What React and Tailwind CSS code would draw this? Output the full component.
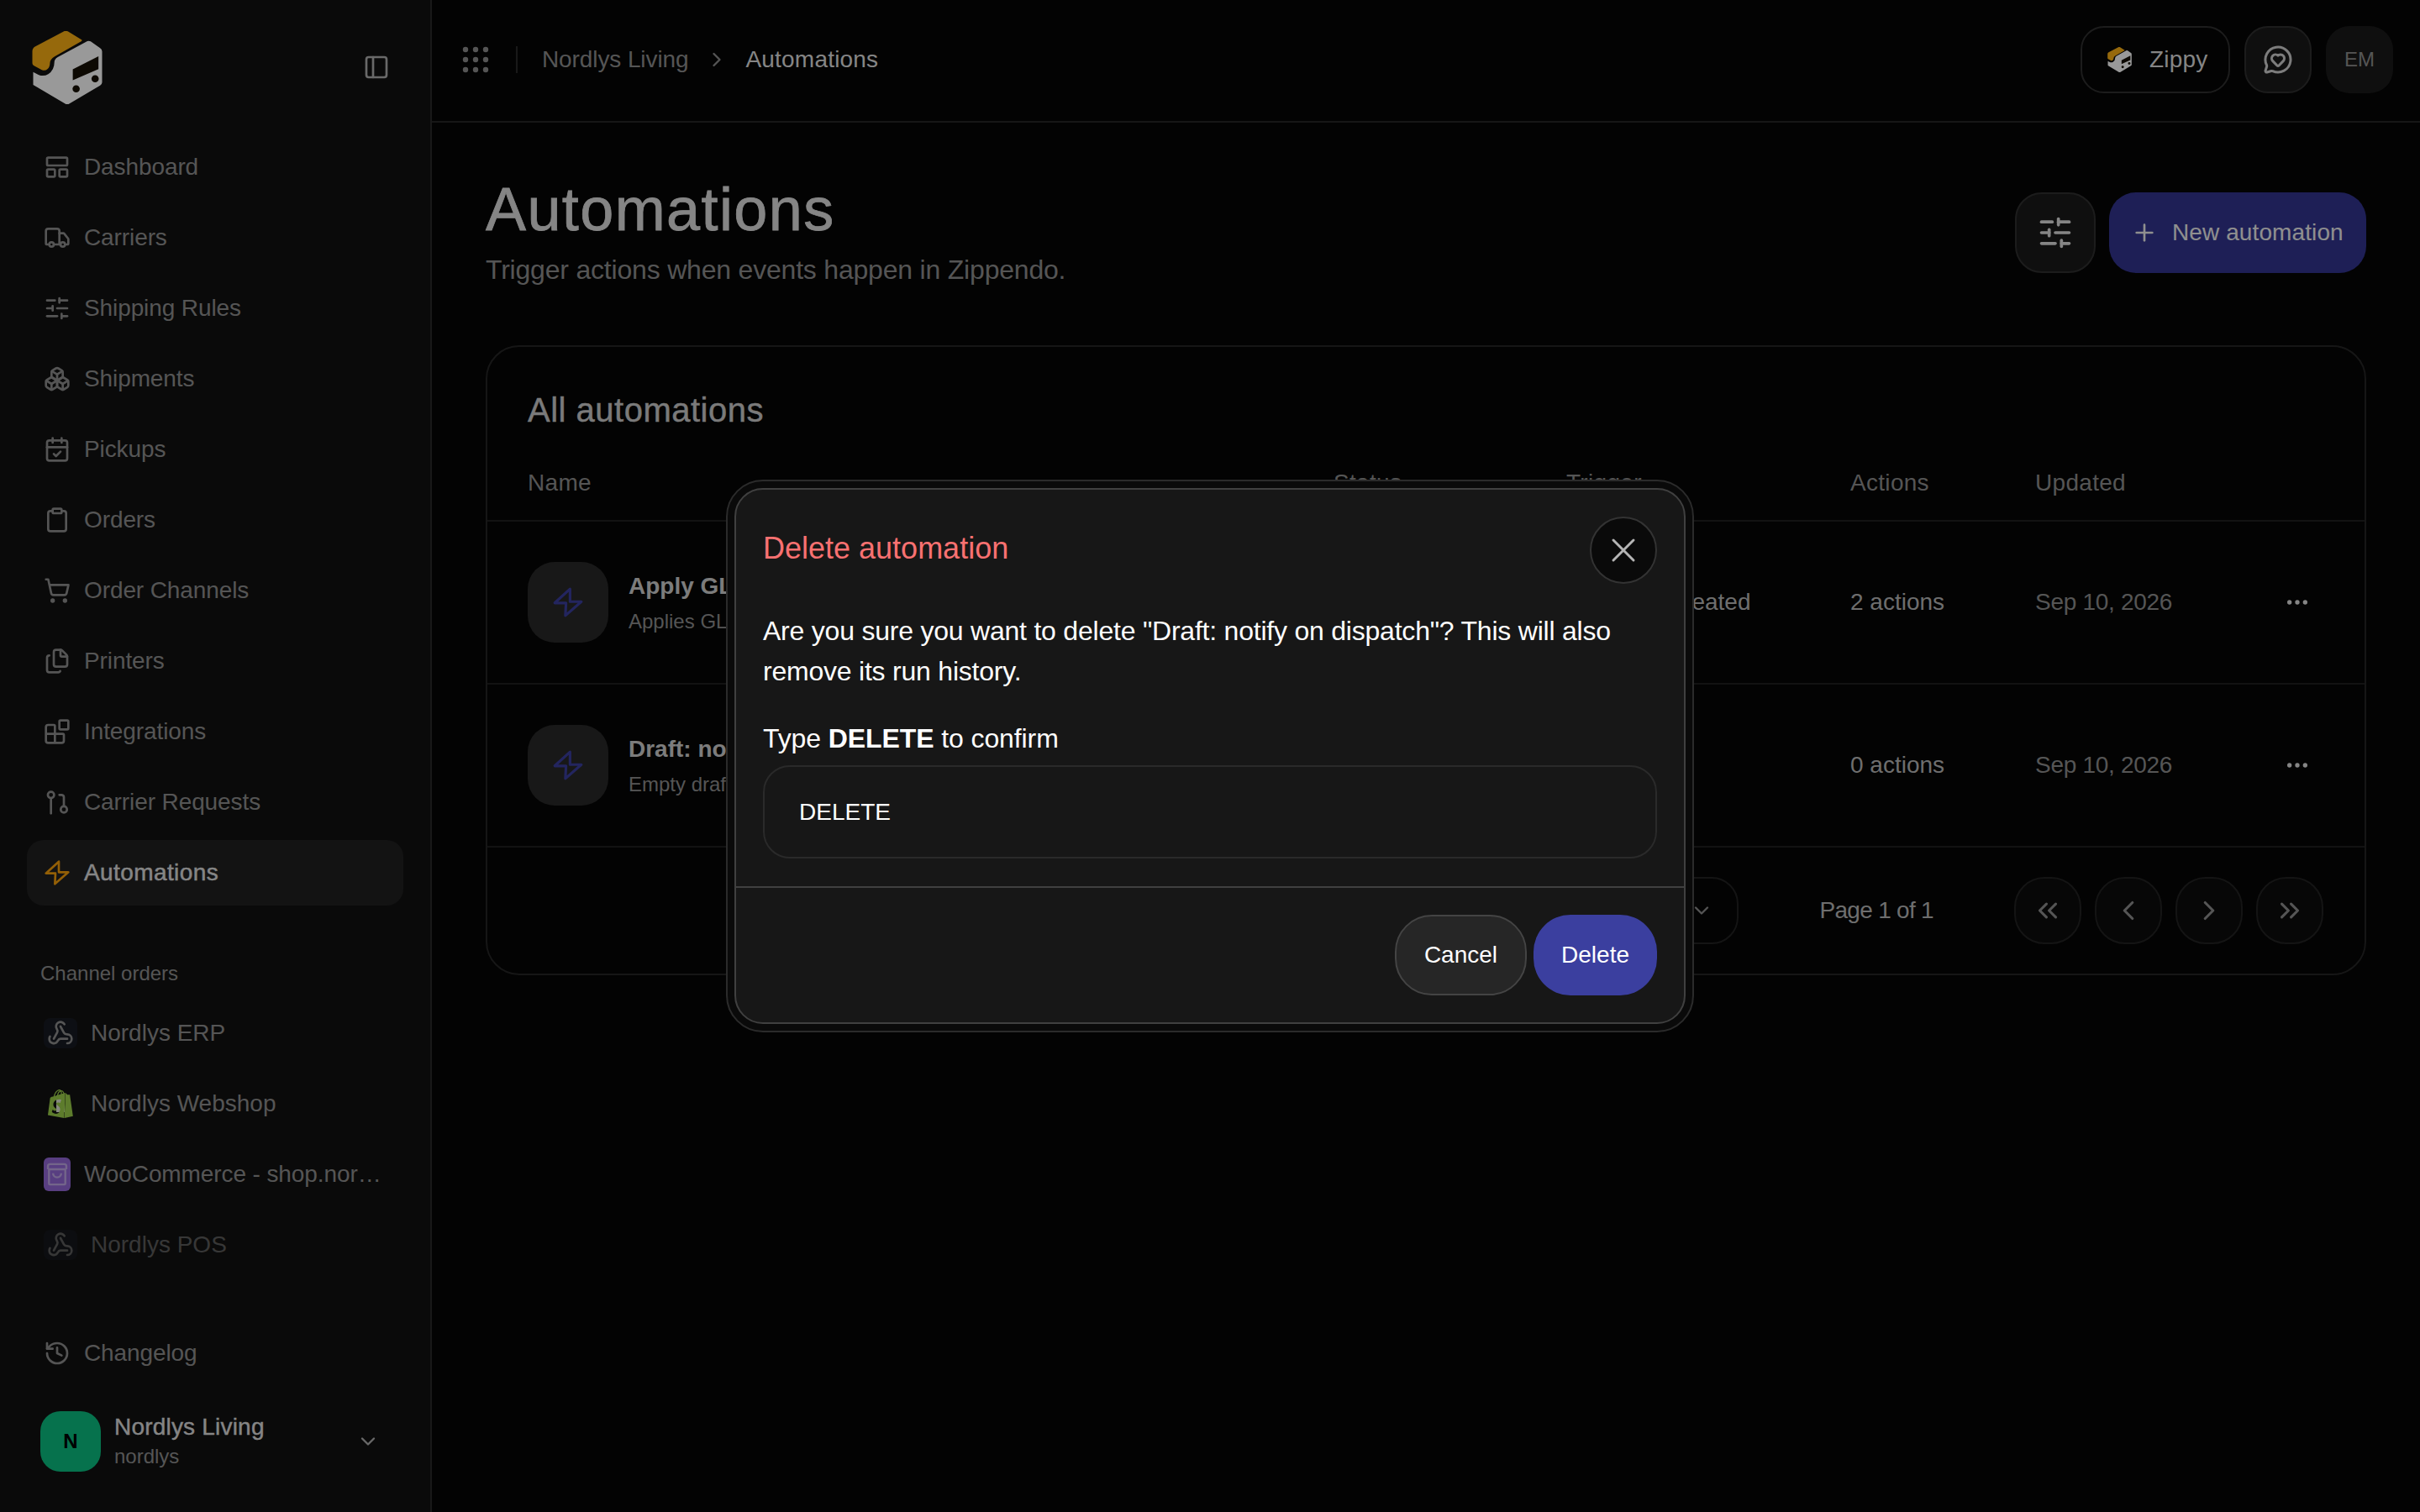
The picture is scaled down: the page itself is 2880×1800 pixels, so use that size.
import React from "react";
import {
  Truck,
  SlidersHorizontal,
  Boxes,
  CalendarCheck,
  Clipboard,
  ShoppingCart,
  Files,
  Blocks,
  Webhook,
  History,
  ChevronDown,
  ChevronRight,
  ChevronLeft,
  ChevronsLeft,
  ChevronsRight,
  PanelLeft,
  MessageCircleHeart,
  Plus,
  Ellipsis,
  X,
} from "lucide-react";
import { SiShopify } from "react-icons/si";

const Logo = ({ className }) => (
  <svg viewBox="55 55 250 262" className={className}>
    <path
      d="M170 55 66 110q-11 6-11 18v42q0 6 6 9l28 15q12 5 20-3 9-7 9-21 0-14 17-24L230 92q6-4 0-7l-48-29q-6-3-12-1z"
      fill="#fbb014"
    />
    <path
      d="M252 91 146 148q-12 7-12 18 0 30-22 43-16 10-34 3l-20-10v46l116 68q6 3 12 0l112-66q7-4 7-11V128q0-8-7-12l-34-24q-6-3-12-1z"
      fill="#fff"
    />
    <path d="M200 192l92-47v46l-92 40z" fill="#161004" />
    <ellipse cx="212" cy="262" rx="13" ry="13" fill="#161004" />
    <ellipse cx="280" cy="226" rx="13" ry="13" fill="#161004" />
  </svg>
);

const DashIcon = (props) => (
  <svg viewBox="0 0 24 24" fill="none" stroke="currentColor" strokeWidth="2" strokeLinejoin="round" {...props}>
    <rect x="3" y="3.5" width="18" height="7" rx="1" />
    <rect x="3" y="14" width="7" height="6.5" rx="1" />
    <rect x="14" y="14" width="7" height="6.5" rx="1" />
  </svg>
);

const RequestIcon = (props) => (
  <svg viewBox="0 0 24 24" fill="none" stroke="currentColor" strokeWidth="2" strokeLinecap="round" {...props}>
    <circle cx="6.5" cy="5.5" r="2.8" />
    <path d="M6.5 8.5V22" />
    <circle cx="18" cy="18.5" r="2.8" />
    <path d="M14 5.5h2.2a2 2 0 0 1 1.8 2v8" />
  </svg>
);

const BoltIcon = (props) => (
  <svg viewBox="0 0 24 24" fill="none" stroke="currentColor" strokeWidth="2" strokeLinejoin="round" {...props}>
    <path d="M13.5 2 2 12.5h8.5L10 22l12-10.5h-8.5z" />
  </svg>
);

const Dots = () => (
  <svg viewBox="0 0 36 36" className="w-[36px] h-[36px] text-[#8e8e8e]" fill="currentColor">
    {[6, 18, 30].map((y) =>
      [6, 18, 30].map((x) => <circle key={`${x}-${y}`} cx={x} cy={y} r="3.2" />)
    )}
  </svg>
);

const navItems = [
  ["Dashboard", DashIcon],
  ["Carriers", Truck],
  ["Shipping Rules", SlidersHorizontal],
  ["Shipments", Boxes],
  ["Pickups", CalendarCheck],
  ["Orders", Clipboard],
  ["Order Channels", ShoppingCart],
  ["Printers", Files],
  ["Integrations", Blocks],
  ["Carrier Requests", RequestIcon],
];

const NavItem = ({ label, Icon }) => (
  <a className="flex items-center gap-[16px] h-[78px] px-[20px] text-[28px] tracking-[-0.1px] text-[#8e8e8e]">
    <Icon className="w-[32px] h-[32px] shrink-0" />
    <span>{label}</span>
  </a>
);

const WebhookTile = () => (
  <span className="flex items-center justify-center w-[40px] h-[36px] rounded-[8px] bg-[#171a22] shrink-0">
    <Webhook className="w-[32px] h-[32px] text-[#8e8e8e]" />
  </span>
);

const Sidebar = () => (
  <aside className="flex flex-col w-[514px] h-full shrink-0 bg-[#121212] border-r-2 border-[#2b2b2b]">
    <div className="flex items-center justify-between h-[160px] pl-[38px] pr-[48px]">
      <Logo className="w-[84px] h-[87px]" />
      <PanelLeft className="w-[32px] h-[32px] text-[#b0b0b0]" />
    </div>
    <nav className="flex flex-col gap-[6px] px-[32px]">
      {navItems.map(([label, Icon]) => (
        <NavItem key={label} label={label} Icon={Icon} />
      ))}
      <a className="flex items-center gap-[16px] h-[78px] px-[20px] rounded-[20px] bg-[#202021] text-[28px] tracking-[0.4px] [-webkit-text-stroke:0.5px_currentColor] text-[#dedede]">
        <BoltIcon className="w-[32px] h-[32px] shrink-0 text-[#f59e0b]" />
        <span>Automations</span>
      </a>
    </nav>
    <div className="mt-[63px] px-[48px] text-[24px] leading-[36px] text-[#8e8e8e]">Channel orders</div>
    <div className="flex flex-col gap-[6px] px-[32px] mt-[14px]">
      <a className="flex items-center gap-[16px] h-[78px] px-[20px] text-[28px] text-[#8e8e8e]">
        <WebhookTile />
        <span>Nordlys ERP</span>
      </a>
      <a className="flex items-center gap-[16px] h-[78px] px-[20px] text-[28px] text-[#8e8e8e]">
        <span className="relative flex items-center justify-center w-[40px] h-[36px] shrink-0">
          <span className="absolute w-[10px] h-[20px] bg-[#e2e6d6]" />
          <SiShopify className="relative w-[34px] h-[36px] text-[#9bcf4a]" />
        </span>
        <span>Nordlys Webshop</span>
      </a>
      <a className="flex items-center gap-[16px] h-[78px] pl-[20px] pr-[22px] text-[28px] tracking-[-0.1px] text-[#8e8e8e]">
        <span className="flex items-center justify-center w-[32px] h-[40px] rounded-[6px] bg-[#9368d8] shrink-0">
          <svg viewBox="0 0 24 28" className="w-[30px] h-[34px]" fill="none" stroke="#c0a8e6" strokeWidth="2">
            <path d="M3 9V6a2 2 0 0 1 2-2h14a2 2 0 0 1 2 2v3M4 9v14a1 1 0 0 0 1 1h14a1 1 0 0 0 1-1V9zM8 13a4 4 0 0 0 8 0" />
          </svg>
        </span>
        <span className="truncate">WooCommerce - shop.nordlys.com</span>
      </a>
      <a className="flex items-center gap-[16px] h-[78px] px-[20px] text-[28px] text-[#8e8e8e] opacity-60">
        <WebhookTile />
        <span>Nordlys POS</span>
      </a>
    </div>
    <div className="mt-auto px-[32px]">
      <NavItem label="Changelog" Icon={History} />
    </div>
    <div className="flex items-center gap-[16px] mt-[30px] mb-[48px] pl-[48px] pr-[60px]">
      <div className="flex items-center justify-center w-[72px] h-[72px] rounded-[24px] bg-[#0abf80] text-[24px] font-bold text-black">N</div>
      <div className="flex-1">
        <div className="text-[28px] leading-[36px] tracking-[0.2px] [-webkit-text-stroke:0.4px_currentColor] text-[#dedede]">Nordlys Living</div>
        <div className="text-[24px] leading-[34px] text-[#8e8e8e]">nordlys</div>
      </div>
      <ChevronDown className="w-[28px] h-[28px] text-[#b0b0b0]" />
    </div>
  </aside>
);

const Topbar = () => (
  <header className="flex items-center justify-between h-[146px] pb-[2px] pl-[34px] pr-[32px] border-b-2 border-[#262626]">
    <div className="flex items-center">
      <Dots />
      <span className="w-[2px] h-[32px] ml-[30px] mr-[29px] bg-[#2b2b2b]" />
      <span className="text-[28px] tracking-[-0.1px] text-[#8e8e8e]">Nordlys Living</span>
      <ChevronRight className="w-[28px] h-[28px] mx-[20px] text-[#8e8e8e]" />
      <span className="text-[28px] tracking-[0.2px] text-[#dedede]">Automations</span>
    </div>
    <div className="flex items-center gap-[17px]">
      <button className="flex items-center gap-[21px] w-[178px] h-[80px] pl-[30px] rounded-[28px] border-2 border-[#303030]">
        <Logo className="w-[29px] h-[30px]" />
        <span className="text-[28px] tracking-[0.2px] text-[#dedede]">Zippy</span>
      </button>
      <button className="flex items-center justify-center w-[80px] h-[80px] rounded-[28px] border-2 border-[#303030] bg-[#1a1a1a]">
        <MessageCircleHeart className="w-[36px] h-[36px] text-[#d0d0d0]" />
      </button>
      <div className="flex items-center justify-center w-[80px] h-[80px] rounded-[28px] bg-[#1a1a1a] text-[24px] text-[#8e8e8e]">EM</div>
    </div>
  </header>
);

const cols = "grid grid-cols-[959px_277px_338px_220px_1fr] items-center px-[48px]";

const rows = [
  { name: "Apply GLS label rules", sub: "Applies GLS rules to new shipments", status: "Active", trigger: "Shipment created", actions: "2 actions" },
  { name: "Draft: notify on dispatch", sub: "Empty draft", status: "Draft", trigger: "Manual", actions: "0 actions" },
];

const Row = ({ row }) => (
  <div className={`${cols} h-[194px] border-b-2 border-[#1e1e1e]`}>
    <div className="flex items-center gap-[24px]">
      <div className="flex items-center justify-center w-[96px] h-[96px] rounded-[32px] bg-[#282828]">
        <BoltIcon className="w-[38px] h-[38px] text-[#3b3f9f]" />
      </div>
      <div className="pt-[2px]">
        <div className="text-[28px] leading-[40px] font-bold text-[#cfcfcf]">{row.name}</div>
        <div className="mt-[4px] text-[24px] leading-[36px] text-[#8e8e8e]">{row.sub}</div>
      </div>
    </div>
    <div className="text-[28px] text-[#8e8e8e]">{row.status}</div>
    <div className="text-[28px] text-[#b8b8b8]">{row.trigger}</div>
    <div className="text-[28px] text-[#b8b8b8]">{row.actions}</div>
    <div className="flex items-center justify-between pr-[16px]">
      <span className="text-[28px] tracking-[-0.3px] text-[#8e8e8e]">Sep 10, 2026</span>
      <Ellipsis className="w-[32px] h-[32px] text-[#dedede]" />
    </div>
  </div>
);

const PageBtn = ({ Icon }) => (
  <button className="flex items-center justify-center w-[80px] h-[80px] rounded-[36px] border-2 border-[#222222] bg-[#0c0c0c]">
    <Icon className="w-[38px] h-[38px] text-[#8e8e8e]" />
  </button>
);

const Content = () => (
  <main className="px-[64px]">
    <div className="flex items-center justify-between pt-[63px] mb-[66px]">
      <div>
        <h1 className="text-[72px] leading-[80px] tracking-[1.4px] [-webkit-text-stroke:0.8px_currentColor] text-[#dedede]">Automations</h1>
        <p className="mt-[8px] text-[32px] leading-[48px] tracking-[-0.2px] text-[#8e8e8e]">Trigger actions when events happen in Zippendo.</p>
      </div>
      <div className="flex items-center gap-[16px]">
        <button className="flex items-center justify-center w-[96px] h-[96px] rounded-[32px] border-2 border-[#303030] bg-[#1a1a1a]">
          <SlidersHorizontal className="w-[44px] h-[44px] text-[#dedede]" />
        </button>
        <button className="flex items-center gap-[17px] w-[306px] h-[96px] pl-[26px] rounded-[32px] bg-[#32358f] text-[28px] tracking-[0.1px] text-[#eeeeee]">
          <Plus className="w-[32px] h-[32px]" />
          New automation
        </button>
      </div>
    </div>
    <section className="rounded-[40px] border-2 border-[#262626]">
      <h2 className="pt-[47px] pl-[48px] text-[40px] leading-[56px] tracking-[0.5px] [-webkit-text-stroke:0.4px_currentColor] text-[#cccccc]">All automations</h2>
      <div className={`${cols} h-[105px] pt-[14px] border-b-2 border-[#1e1e1e] text-[28px] tracking-[0.3px] text-[#8e8e8e]`}>
        <div>Name</div>
        <div>Status</div>
        <div>Trigger</div>
        <div>Actions</div>
        <div>Updated</div>
      </div>
      {rows.map((row) => (
        <Row key={row.name} row={row} />
      ))}
      <div className="flex items-center justify-end h-[150px] pr-[49px]">
        <button className="flex items-center justify-end w-[140px] h-[80px] pr-[28px] rounded-[32px] border-2 border-[#222222]">
          <ChevronDown className="w-[28px] h-[28px] text-[#8e8e8e]" />
        </button>
        <span className="ml-[96px] mr-[96px] text-[28px] tracking-[-0.7px] text-[#b8b8b8]">Page 1 of 1</span>
        <div className="flex items-center gap-[16px]">
          <PageBtn Icon={ChevronsLeft} />
          <PageBtn Icon={ChevronLeft} />
          <PageBtn Icon={ChevronRight} />
          <PageBtn Icon={ChevronsRight} />
        </div>
      </div>
    </section>
  </main>
);

const DeleteModal = () => (
  <div className="absolute inset-0 flex items-center justify-center bg-black/40">
    <div className="w-[1152px] p-[8px] rounded-[44px] border-2 border-[#2b2b2b] bg-[#0a0a0a]">
      <div className="rounded-[34px] border-2 border-[#404040] bg-[#171717]">
        <div className="px-[32px] pt-[32px] pb-[33px]">
          <div className="flex items-center justify-between">
            <h3 className="text-[36px] leading-[48px] -mt-[4px] text-[#f87171]">Delete automation</h3>
            <button className="flex items-center justify-center w-[80px] h-[80px] rounded-full border-2 border-[#333333] bg-[#0a0a0a]">
              <X className="w-[48px] h-[48px] text-[#b5b5b5]" strokeWidth={1.5} />
            </button>
          </div>
          <p className="mt-[32px] text-[32px] leading-[48px] tracking-[-0.22px] text-white">
            Are you sure you want to delete "Draft: notify on dispatch"? This will also remove its run history.
          </p>
          <p className="mt-[32px] text-[32px] leading-[48px] tracking-[-0.1px] text-white">
            Type <strong>DELETE</strong> to confirm
          </p>
          <input
            readOnly
            value="DELETE"
            className="block w-full h-[111px] mt-[8px] px-[41px] rounded-[32px] border-2 border-[#2a2a2a] bg-transparent text-[28px] text-white outline-none"
          />
        </div>
        <div className="flex justify-end gap-[8px] p-[32px] border-t-2 border-[#404040]">
          <button className="h-[96px] px-[33px] rounded-[44px] border-2 border-[#444444] bg-[#262626] text-[28px] text-white">Cancel</button>
          <button className="h-[96px] px-[33px] rounded-[44px] bg-[#3b3f9f] text-[28px] text-white">Delete</button>
        </div>
      </div>
    </div>
  </div>
);

const App = () => (
  <div className="relative flex h-screen overflow-hidden bg-[#050505] font-['Liberation_Sans',sans-serif]">
    <Sidebar />
    <div className="flex-1 min-w-0">
      <Topbar />
      <Content />
    </div>
    <DeleteModal />
  </div>
);

export default App;
